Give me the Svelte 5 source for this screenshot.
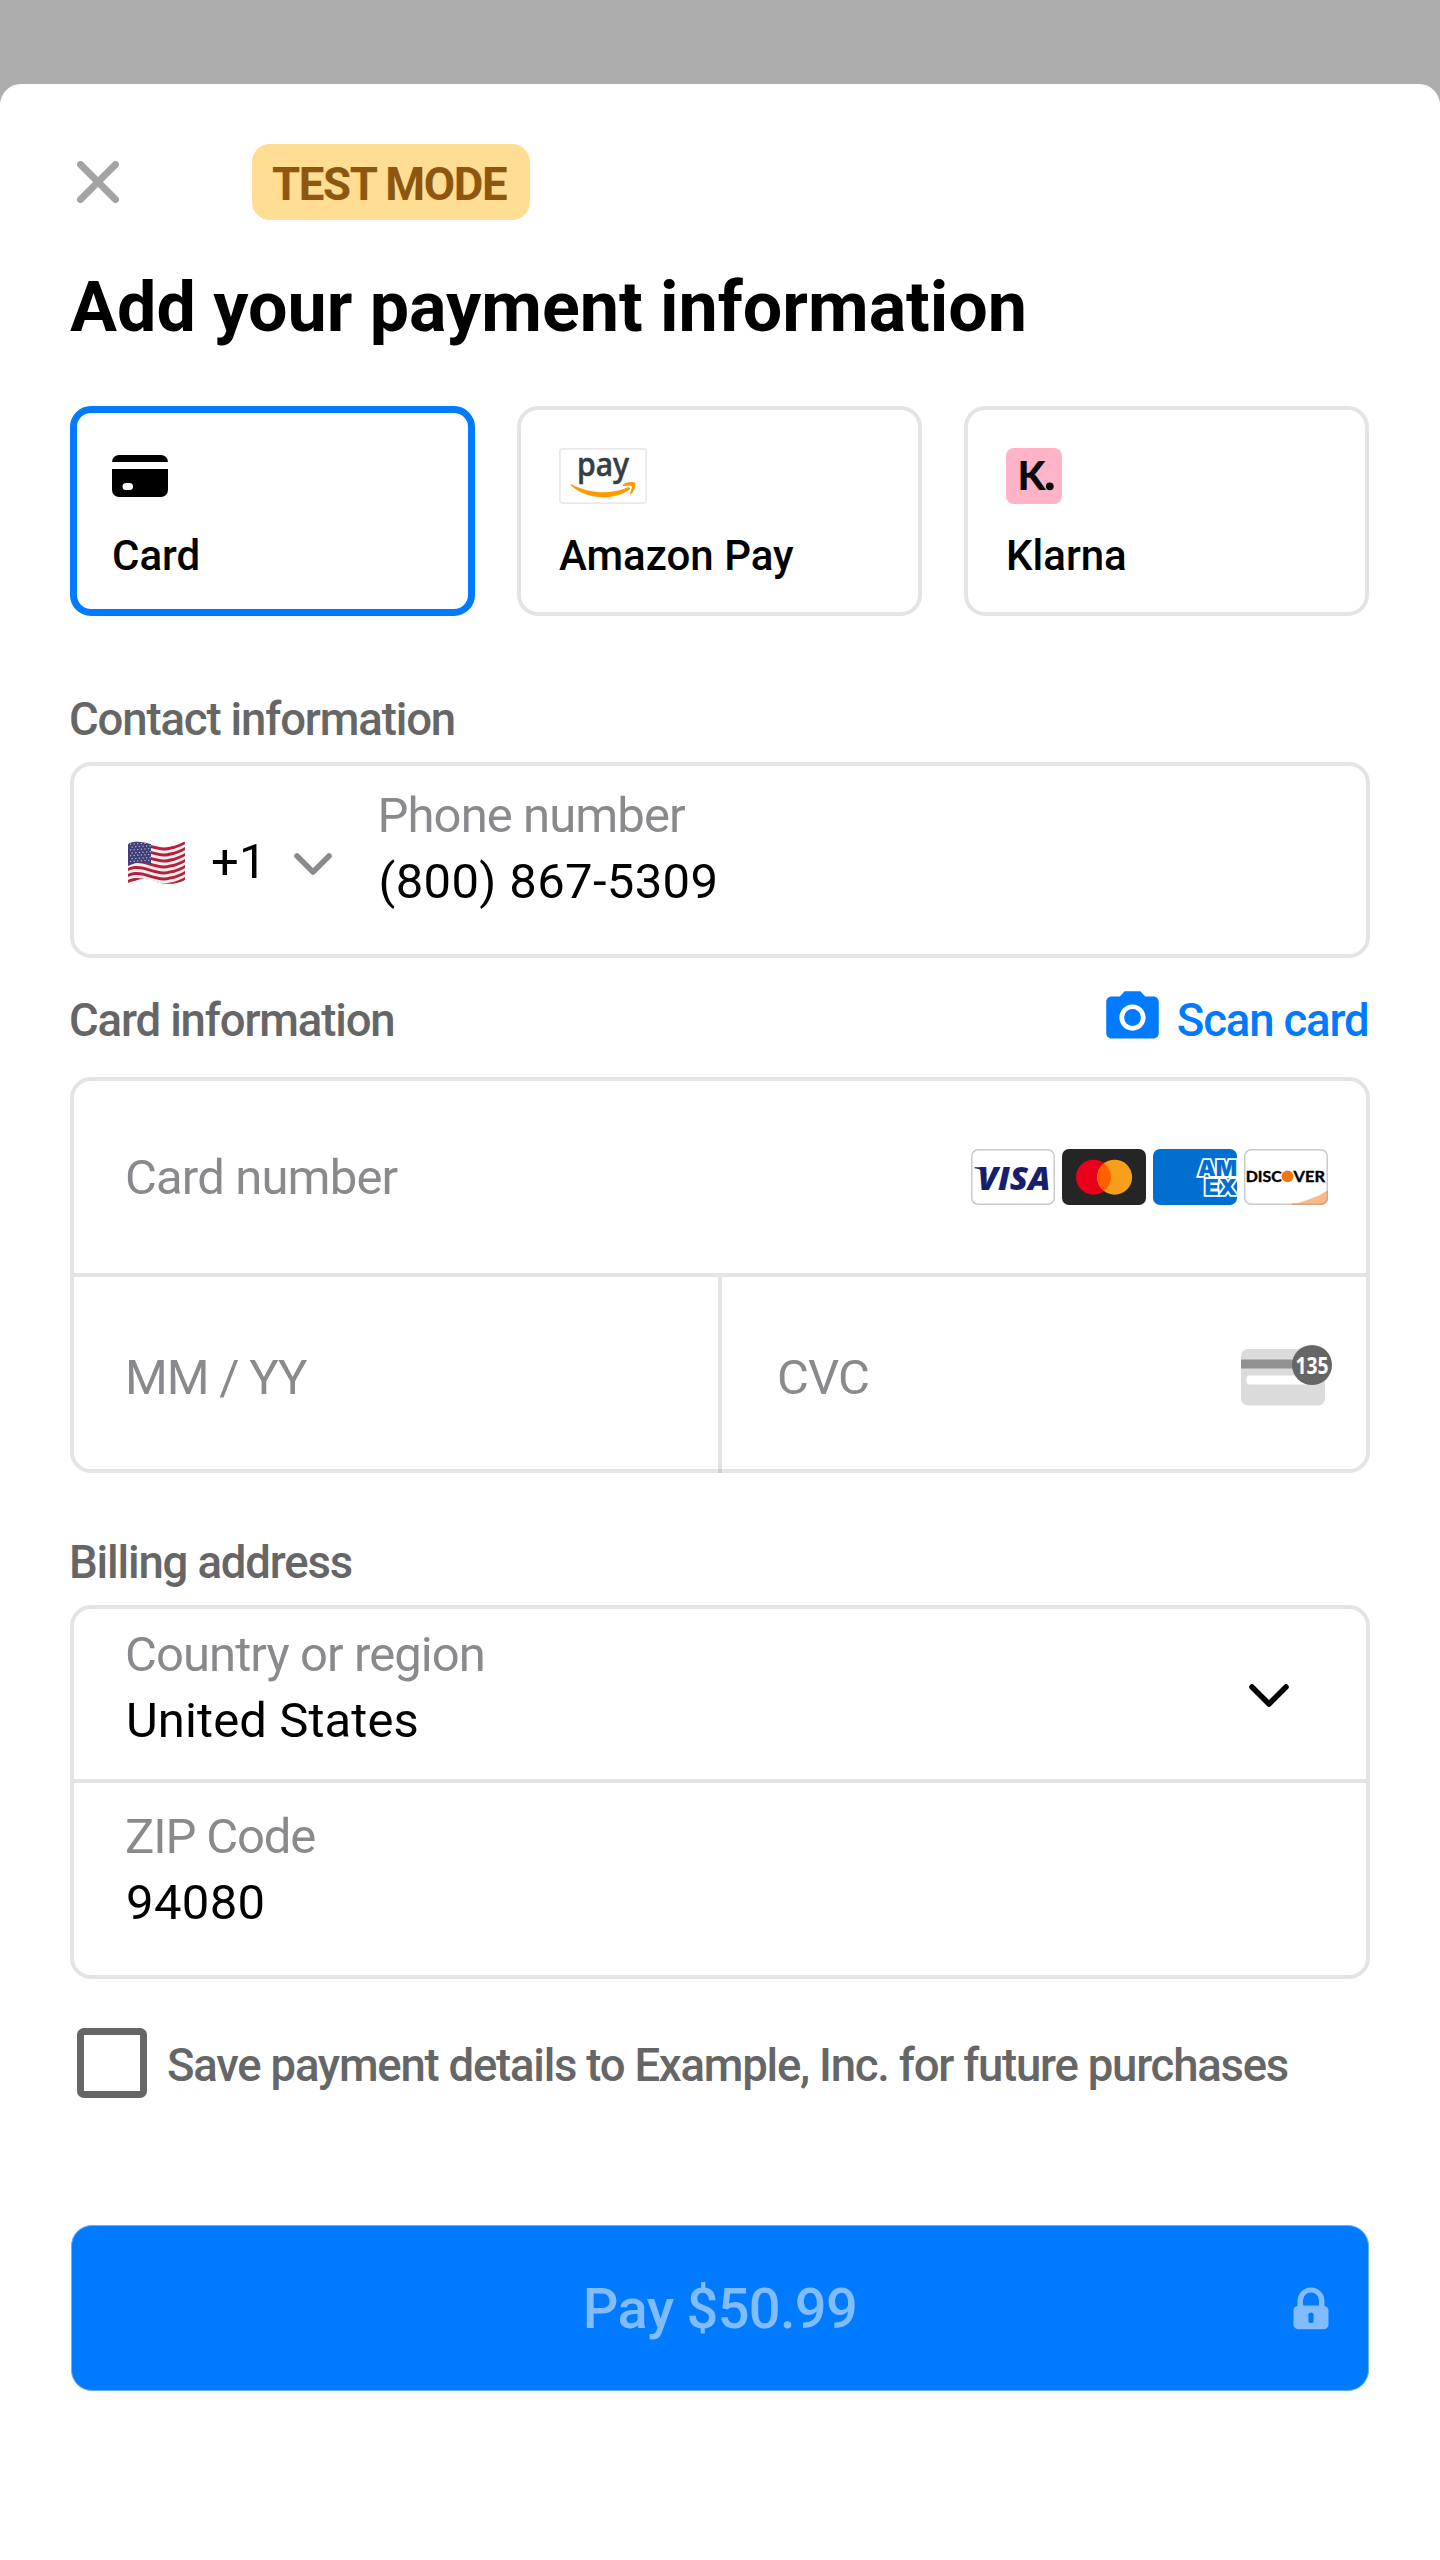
<script>
  const stripes = [0, 2, 4, 6, 8, 10, 12];
  const stars = [];
  for (let r = 0; r < 7; r++) {
    for (let c = 0; c < 6; c++) stars.push([2.6 + c * 3.6 + (r % 2) * 1.6, 3.2 + r * 2.9 - c * 0.25]);
  }
  const h = 41 / 13;
  const wave = (i) => {
    const y = 3 + i * (h - 0.16);
    const b = y + h - 0.1;
    return `M0 ${y}C14 ${y - 7} 28 ${y + 7} 42 ${y + 2.6}C48 ${y + 1.6} 53 ${y - 0.6} 57 ${y - 3}V${b - 3}C53 ${b - 0.6} 48 ${b + 1.6} 42 ${b + 2.6}C28 ${b + 7} 14 ${b - 7} 0 ${b}Z`;
  };
</script>

<main class="sheet">
  <header>
    <svg class="close" viewBox="0 0 42 42"><path d="M3.5 3.5l35 35M38.5 3.5l-35 35" /></svg>
    <span class="badge">TEST MODE</span>
  </header>

  <h1>Add your payment information</h1>

  <div class="methods">
    <div class="method selected">
      <svg class="icon" width="56" height="56" viewBox="0 0 56 56">
        <path d="M7 7H49A7 7 0 0 1 56 14H0A7 7 0 0 1 7 7Z" />
        <path fill-rule="evenodd" d="M0 21H56V42A7 7 0 0 1 49 49H7A7 7 0 0 1 0 42ZM14 35A3.5 3.5 0 0 0 14 42H17.5A3.5 3.5 0 0 0 17.5 35Z" />
      </svg>
      <span>Card</span>
    </div>
    <div class="method">
      <svg class="icon" width="88" height="56" viewBox="0 0 88 56">
        <rect x=".9" y=".9" width="86.2" height="54.2" rx="2.5" fill="#fff" stroke="#e9e9e9" stroke-width="1.6" />
        <text x="18" y="28" font-family="Noto Sans, sans-serif" font-weight="500" font-size="32" fill="#333e48" stroke="#333e48" stroke-width=".6" textLength="52" lengthAdjust="spacingAndGlyphs">pay</text>
        <path fill="#ff9900" d="M12 36C29 45.500 52 47 68.500 39.500C71 38.600 72 40.500 70 42C52 54 26 50.500 12 37.600C11.300 36.800 11.500 35.800 12 36Z" />
        <path fill="#ff9900" d="M64 36.500C68 33.500 75 33.600 76.300 35C77.300 36.600 75.500 43.400 72 46.200C71.300 46.700 70.600 46.400 71 45.500C72 43 73.200 39 72.600 38.200C71.800 37.300 67.500 37.700 65 38C64 38.100 63.400 37.200 64 36.500Z" />
      </svg>
      <span>Amazon Pay</span>
    </div>
    <div class="method">
      <svg class="icon" width="56" height="56" viewBox="0 0 56 56">
        <rect width="56" height="56" rx="8" fill="#ffb3c7" />
        <text x="11.500" y="42" font-family="Lato, sans-serif" font-weight="900" font-size="39" fill="#0a0a0a" textLength="28" lengthAdjust="spacingAndGlyphs">K</text>
        <circle cx="43.800" cy="38.300" r="3.900" fill="#0a0a0a" />
      </svg>
      <span>Klarna</span>
    </div>
  </div>

  <h2 class="contact">Contact information</h2>
  <div class="box phone">
    <svg class="flag" width="57" height="43" viewBox="0 0 57 43">
      <clipPath id="cloth"><path d="M0 4.500Q0 3 1.500 2.300C14 -3 28 8 42 5.600C48 4.600 53 2 55.500 .8Q57 .2 57 2V38Q57 39.500 55.500 40C40 46 28 41 22 39C14 36.500 8 39.500 2 42Q0 42.800 0 41Z" /></clipPath>
      <g clip-path="url(#cloth)">
        <rect width="57" height="43" fill="#f1eeee" />
        {#each stripes as i}<path d={wave(i)} fill="#b5203a" />{/each}
        <path d="M0 0H23V23.500C16 20.500 8 21 0 25Z" fill="#3f3f78" />
        {#each stars as s}<circle cx={s[0]} cy={s[1]} r=".75" fill="#b9b9d4" />{/each}
      </g>
    </svg>
    <span class="value code">+1</span>
    <svg class="chev grey" width="40" height="24" viewBox="0 0 40 24"><path d="M4 4L20 20L36 4" /></svg>
    <div class="stack">
      <span class="label">Phone number</span>
      <span class="value digits">(800) 867-5309</span>
    </div>
  </div>

  <div class="cardhead">
    <h2>Card information</h2>
    <div class="scan">
      <svg width="63" height="63" viewBox="0 0 24 24"><circle cx="12" cy="12" r="3.200" /><path d="M9 2L7.170 4H4c-1.100 0-2 .9-2 2v12c0 1.100.9 2 2 2h16c1.100 0 2-.9 2-2V6c0-1.100-.9-2-2-2h-3.170L15 2H9zm3 15c-2.760 0-5-2.240-5-5s2.240-5 5-5 5 2.240 5 5-2.240 5-5 5z" /></svg>
      <span>Scan card</span>
    </div>
  </div>

  <div class="box">
    <div class="row number">
      <span class="label">Card number</span>
      <div class="brands">
        <svg width="84" height="56" viewBox="0 0 84 56">
          <rect x=".75" y=".75" width="82.500" height="54.500" rx="6.500" fill="#fff" stroke="#cacaca" stroke-width="1.500" />
          <text x="6.500" y="41" font-family="Open Sans, sans-serif" font-weight="800" font-style="italic" font-size="32" fill="#171e6c" textLength="73" lengthAdjust="spacingAndGlyphs">VISA</text>
          <path d="M3.500 18.300H12L16.500 27C13 22 9 19.800 3.500 19.200Z" fill="#171e6c" />
        </svg>
        <svg width="84" height="56" viewBox="0 0 84 56">
          <rect width="84" height="56" rx="7" fill="#252525" />
          <circle cx="31.500" cy="28.200" r="17.500" fill="#eb001b" />
          <circle cx="52.600" cy="28.200" r="17.500" fill="#f79e1b" />
          <path d="M42.050 14.300A17.500 17.500 0 0 1 42.050 42.100A17.500 17.500 0 0 1 42.050 14.300Z" fill="#ff5f00" />
        </svg>
        <svg class="amex" width="84" height="56" viewBox="0 0 84 56">
          <rect width="84" height="56" rx="7" fill="#016fd0" />
          <g font-family="Inter, sans-serif" font-weight="900" font-size="22" fill="#016fd0" stroke="#fff" stroke-width="3.600" paint-order="stroke">
            <text x="45" y="27" textLength="39" lengthAdjust="spacingAndGlyphs">AM</text>
            <text x="51.500" y="45.800" textLength="32.500" lengthAdjust="spacingAndGlyphs">EX</text>
          </g>
        </svg>
        <svg width="84" height="56" viewBox="0 0 84 56">
          <clipPath id="disccard"><rect width="84" height="56" rx="7" /></clipPath>
          <rect x=".75" y=".75" width="82.500" height="54.500" rx="6.500" fill="#fff" stroke="#cacaca" stroke-width="1.500" />
          <path clip-path="url(#disccard)" d="M44 56C60 53 74 48 84 41V56Z" fill="#f9b98b" />
          <path d="M48 55.250H76.500A6.500 6.500 0 0 0 83.250 48.500V42" fill="none" stroke="#dba37c" stroke-width="1.500" />
          <g font-family="Lato, sans-serif" font-weight="700" font-size="15.200" fill="#000" stroke="#000" stroke-width=".4">
            <text x="1.700" y="32.600" textLength="36" lengthAdjust="spacingAndGlyphs">DISC</text>
            <text x="49.500" y="32.600" textLength="31.500" lengthAdjust="spacingAndGlyphs">VER</text>
          </g>
          <circle cx="43.500" cy="27.300" r="5.900" fill="#f27712" />
        </svg>
      </div>
    </div>
    <div class="row split">
      <div class="cell"><span class="label tight">MM / YY</span></div>
      <div class="cell cvc">
        <span class="label">CVC</span>
        <svg width="92" height="62" viewBox="0 0 92 62">
          <rect y="4" width="84" height="56.500" rx="7" fill="#dbdbdb" />
          <rect y="14.500" width="84" height="9" fill="#919191" />
          <rect x="5.500" y="30.500" width="70" height="9" rx="3" fill="#fff" />
          <circle cx="71" cy="20" r="20" fill="#666" />
          <text x="54.500" y="28.500" font-family="Open Sans, sans-serif" font-weight="700" font-size="23.500" fill="#fff" textLength="33" lengthAdjust="spacingAndGlyphs">135</text>
        </svg>
      </div>
    </div>
  </div>

  <h2 class="billing">Billing address</h2>
  <div class="box">
    <div class="row country">
      <div class="stack">
        <span class="label">Country or region</span>
        <span class="value">United States</span>
      </div>
      <svg class="chev dark" width="42" height="26" viewBox="0 0 42 26"><path d="M4 4L21 21L38 4" /></svg>
    </div>
    <div class="row zip">
      <div class="stack">
        <span class="label tight">ZIP Code</span>
        <span class="value digits">94080</span>
      </div>
    </div>
  </div>

  <div class="save">
    <i></i>
    <span>Save payment details to Example, Inc. for future purchases</span>
  </div>

  <div class="pay">
    <span>Pay $50.99</span>
    <svg class="lock" width="36" height="43" viewBox="0 0 36 43">
      <path fill-rule="evenodd" d="M4.500 19V14A13.500 13.500 0 0 1 31.500 14V19A4.500 4.500 0 0 1 35.500 23V37.500A4.500 4.500 0 0 1 31 42.200H5A4.500 4.500 0 0 1 .5 37.500V23A4.500 4.500 0 0 1 4.500 19ZM10 18.500H26V13.500A8 8 0 0 0 10 13.500ZM15.400 28V33.500A2.600 2.600 0 0 0 20.600 33.500V28A2.600 2.600 0 0 0 15.400 28Z" />
    </svg>
  </div>
</main>

<style>
  :global(body) { margin: 0; background: #adadad; }
  :global(#app) { overflow: hidden; }
  * { box-sizing: border-box; }
  svg { display: block; flex: none; }
  .sheet { margin-top: 84px; height: 2476px; padding: 60px 70px 0; background: #fff; border-radius: 21px 21px 0 0; font-family: Roboto, sans-serif; color: #000; white-space: nowrap; }
  header { display: flex; align-items: center; gap: 133px; padding-left: 7px; height: 76px; }
  .close { width: 42px; height: 42px; }
  .close path { stroke: #a3a3a3; stroke-width: 7; stroke-linecap: round; }
  .badge { height: 76px; width: 278px; padding: 5px 0 0 20px; line-height: 72px; background: #ffdd93; border-radius: 18px; color: #8e5710; font-weight: 700; font-size: 45.5px; letter-spacing: -1.35px; }
  h1 { margin: 45px 0 0; font-size: 70px; line-height: 84px; font-weight: 700; letter-spacing: 0; }
  .methods { display: flex; gap: 42px; margin-top: 57px; }
  .method { width: 405px; height: 210px; border: 4px solid #e4e4e6; border-radius: 21px; padding: 38px; display: flex; flex-direction: column; gap: 27px; }
  .method.selected { border: 7px solid #007aff; padding: 35px; }
  .method span { font-size: 42px; line-height: 50px; font-weight: 500; }
  h2 { margin: 0 0 0 -1px; font-size: 45.5px; line-height: 54px; font-weight: 500; letter-spacing: -1.14px; color: #666; }
  h2.contact { margin-top: 77px; }
  h2.billing { margin-top: 63px; }
  .box { width: 1300px; border: 4px solid #e4e4e6; border-radius: 21px; }
  .contact + .box, .billing + .box { margin-top: 15px; }
  .label, .value { font-size: 49px; line-height: 66px; }
  .label { color: #8a8a8e; letter-spacing: -.92px; }
  .label.tight { letter-spacing: -1.15px; }
  .value { letter-spacing: .1px; padding-left: 1px; }
  .value.digits { letter-spacing: .35px; }
  .stack { display: flex; flex-direction: column; }
  .phone { display: flex; height: 196px; padding-left: 54px; }
  .flag { margin-top: 75px; }
  .code { margin: 63px 0 0 25px; }
  .chev path { fill: none; stroke-width: 5.5; stroke-linecap: round; stroke-linejoin: round; }
  .chev.grey { margin: 86px 0 0 26px; }
  .grey path { stroke: #8a8a8e; }
  .dark path { stroke: #000; }
  .phone .stack { margin: 17px 0 0 45px; }
  .cardhead { display: flex; justify-content: space-between; margin: 36px 0 29px; height: 54px; }
  .scan { display: flex; color: #007aff; font-size: 45.5px; font-weight: 500; line-height: 54px; letter-spacing: -1.15px; gap: 13px; padding-right: 1.5px; }
  .scan svg { fill: #007aff; margin-top: -8px; }
  .row { display: flex; height: 192px; padding-left: 51px; }
  .row + .row { border-top: 4px solid #e4e4e6; height: 196px; }
  .number { justify-content: space-between; align-items: center; padding-right: 38px; }
  .brands { display: flex; gap: 7px; }
  .number .label { margin-top: 1px; letter-spacing: -.85px; }
  .split { padding-left: 0; }
  .cell { width: 644px; padding: 68px 0 0 51px; display: flex; }
  .cvc { width: 648px; margin-bottom: -4px; border-left: 4px solid rgba(120, 120, 128, .2); padding: 68px 33px 0 55px; justify-content: space-between; }
  .row.country { height: 170px; padding: 13px 35px 0 51px; justify-content: space-between; }
  .country .chev { margin-top: 61px; margin-right: 41px; }
  .row.zip { padding-top: 21px; height: 196px; }
  .save { display: flex; align-items: center; gap: 20px; margin: 49px 0 0 7px; height: 70px; }
  .save i { width: 70px; height: 70px; border: 7px solid #666; border-radius: 7px; }
  .save span { color: #666; font-size: 45.5px; font-weight: 500; line-height: 54px; padding-top: 6px; letter-spacing: -1.23px; }
  .pay { position: relative; display: flex; align-items: center; justify-content: center; width: 1298px; height: 166px; margin: 127px 0 0 1px; border-radius: 21px; background: #007aff; border: 1px solid #66aeff; color: #80bcff; font-size: 56px; font-weight: 500; letter-spacing: -.7px; }
  .pay span { padding-top: 2px; }
  .lock { position: absolute; right: 39px; top: 61px; fill: #80bcff; }
</style>
